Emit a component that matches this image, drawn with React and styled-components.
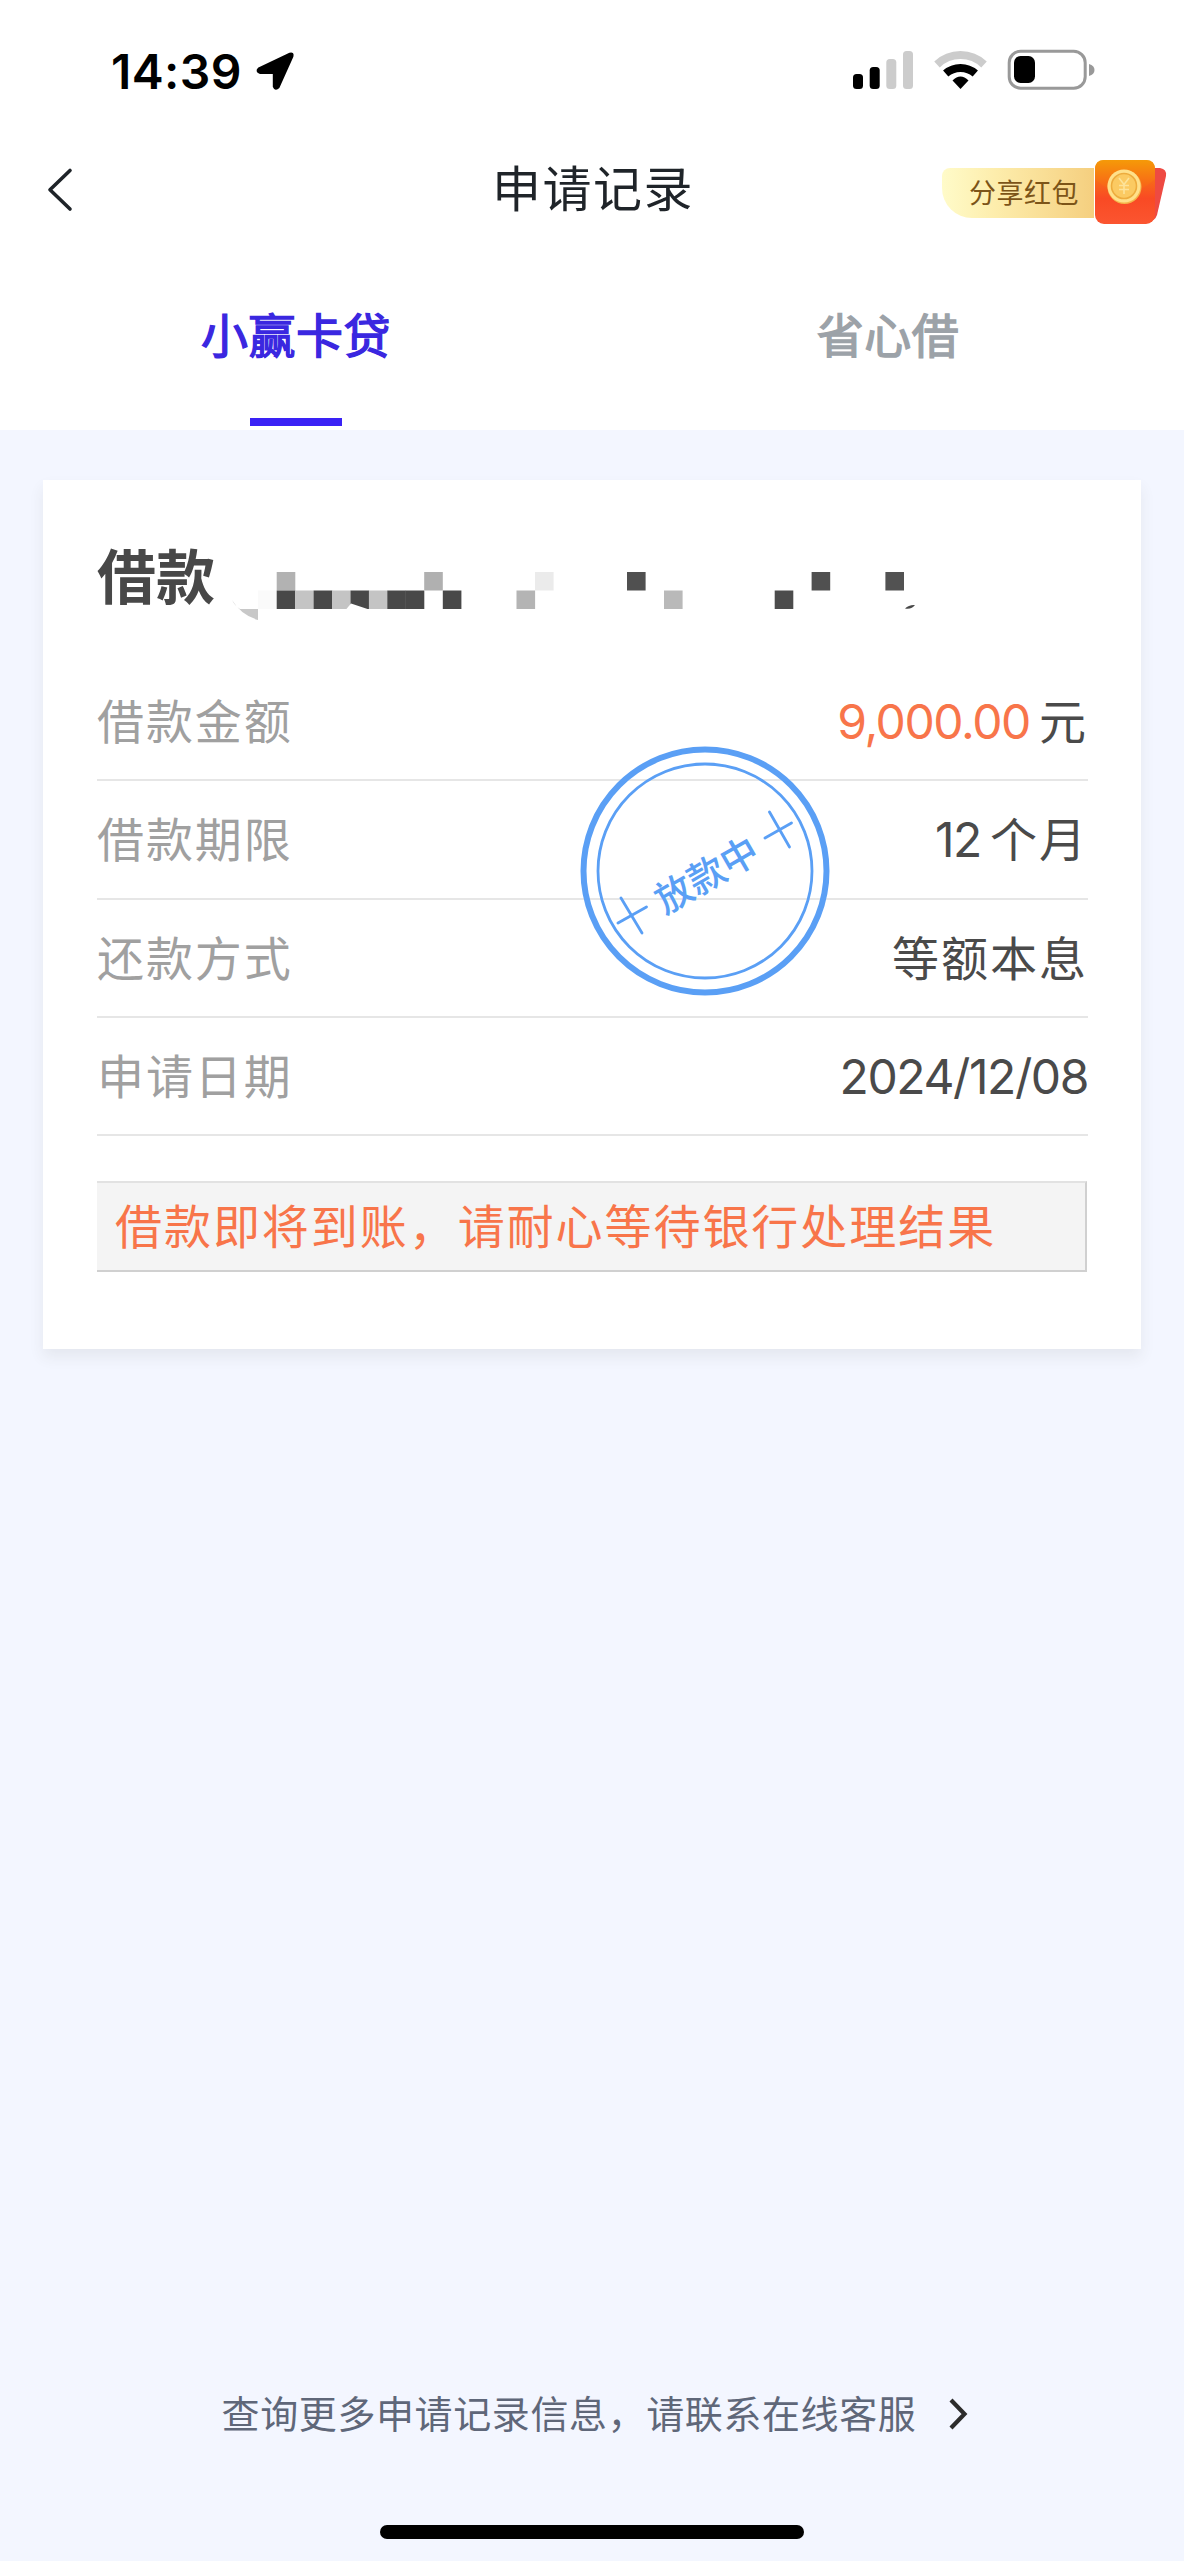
import React from 'react'
import styled, { createGlobalStyle } from 'styled-components'

const GlobalStyle = createGlobalStyle`
  * {
    box-sizing: border-box;
  }
  body {
    margin: 0;
    background: #f3f6ff;
    font-family: Inter, 'Noto Sans CJK SC', sans-serif;
  }
`

const tabs = [
  { label: '小赢卡贷', active: true },
  { label: '省心借', active: false }
]

const rows = [
  { label: '借款金额', amount: '9,000.00', value: '元' },
  { label: '借款期限', number: '12', value: '个月' },
  { label: '还款方式', value: '等额本息' },
  { label: '申请日期', number: '2024/12/08' }
]

// x, y, fill of each block that hides the loan number
const blocks = [
  [46, 18.5, '#fafafa'],
  [64.7, 0, '#b2b2b2'],
  [64.7, 18.5, '#484848'],
  [83.1, 18.5, '#c4c4c4'],
  [101.6, 18.5, '#484848'],
  [120, 18.5, '#c4c4c4'],
  [138.5, 18.5, '#484848'],
  [156.9, 18.5, '#c4c4c4'],
  [175.3, 18.5, '#484848'],
  [193.7, 18.5, '#484848'],
  [212.2, 0, '#b0b0b0'],
  [230.8, 18.5, '#484848'],
  [304.5, 18.5, '#b4b4b4'],
  [323, 0, '#ebebeb'],
  [415, 0, '#505050'],
  [452, 18.5, '#b9b9b9'],
  [562.7, 18.5, '#4c4c4c'],
  [599.6, 0, '#505050'],
  [673.4, 0, '#525252']
]

const Page = styled.div`
  display: flex;
  flex-direction: column;
  width: 1184px;
  height: 2561px;
  background: #f3f6ff;
`

const Header = styled.header`
  height: 430px;
  background: #fff;
`

const StatusBar = styled.div`
  display: flex;
  justify-content: space-between;
  height: 140px;
  padding: 42px 89px 0 111px;
`

const Clock = styled.div`
  display: flex;
  gap: 14px;
  height: 58px;
  font-size: 48px;
  font-weight: 600;
  line-height: 59px;
  letter-spacing: 0.4px;
  color: #000;
  svg {
    margin-top: 10px;
  }
`

const NavBar = styled.div`
  display: grid;
  grid-template-columns: 1fr auto 1fr;
  height: 120px;
  padding: 0 16px;
`

const BackIcon = styled.svg`
  margin: 26px 0 0 28px;
`

const Title = styled.h1`
  margin: 0;
  padding-left: 2px;
  font-size: 49px;
  font-weight: 400;
  line-height: 100px;
  letter-spacing: 1.5px;
  color: #1f2429;
`

const Share = styled.div`
  display: flex;
  justify-content: flex-end;
  align-items: flex-start;
  padding-top: 17px;
`

const ShareLabel = styled.span`
  width: 152px;
  height: 50px;
  margin-top: 11px;
  padding-left: 27px;
  border-radius: 8px 0 0 30px;
  background: linear-gradient(90deg, #fffbc9, #fdedac 35%, #f5cf7f);
  font-size: 27px;
  line-height: 52px;
  letter-spacing: 0.5px;
  white-space: nowrap;
  color: #7c5418;
`

const Tabs = styled.nav`
  display: grid;
  grid-template-columns: 1fr 1fr;
  height: 170px;
`

const Tab = styled.div`
  display: flex;
  flex-direction: column;
  align-items: center;
  justify-content: space-between;
  padding: 41px 0 4px;
  font-size: 47px;
  font-weight: 400;
  line-height: 70px;
  letter-spacing: 0.5px;
  -webkit-text-stroke: 1.4px currentColor;
  color: ${props => (props.$active ? '#3a27e0' : '#9ca2a8')};
  &::after {
    content: '';
    width: 92px;
    height: 8px;
    background: ${props => (props.$active ? '#3a22f5' : 'transparent')};
  }
`

const Card = styled.section`
  position: relative;
  height: 869px;
  margin: 50px 43px 0;
  padding: 56px 53px 0 54px;
  background: #fff;
  box-shadow: 0 8px 14px rgba(70, 65, 50, 0.08);
`

const CardHead = styled.div`
  display: flex;
  height: 127px;
`

const CardTitle = styled.h2`
  margin: 0;
  font-size: 59px;
  font-weight: 700;
  line-height: 84px;
  color: #484848;
`

const Mosaic = styled.svg`
  margin: 36px 0 0 -3px;
`

const Row = styled.div`
  display: flex;
  justify-content: space-between;
  height: 118.3px;
  padding-top: 23px;
  border-bottom: 2px solid #e6e6e6;
  line-height: 72px;
`

const Label = styled.span`
  font-size: 47px;
  letter-spacing: 1.9px;
  color: #a0a0a0;
`

const Value = styled.span`
  display: flex;
  gap: 9px;
  color: #4a4a4a;
`

const Digits = styled.span`
  font-size: 48px;
  letter-spacing: -1.4px;
  color: ${props => (props.$accent ? '#f8754a' : 'inherit')};
`

const Unit = styled.span`
  font-size: 47px;
  letter-spacing: 2px;
`

const Stamp = styled.svg`
  position: absolute;
  left: 535px;
  top: 264px;
`

const Notice = styled.p`
  height: 91px;
  margin: 45px 1px 0 0;
  padding-left: 18px;
  border: 2px solid #d0d0d0;
  border-top-color: #e2e2e2;
  border-left: 0;
  background: #f4f4f4;
  font-size: 47px;
  line-height: 87px;
  letter-spacing: 1.95px;
  white-space: nowrap;
  color: #f8754a;
`

const Footer = styled.footer`
  display: flex;
  flex-direction: column;
  align-items: center;
  height: 186px;
  margin-top: auto;
`

const Contact = styled.a`
  display: flex;
  align-items: center;
  gap: 32px;
  padding-left: 6px;
  height: 78px;
  font-size: 38px;
  letter-spacing: 0.6px;
  line-height: 78px;
  color: #5f6779;
`

const HomeIndicator = styled.div`
  width: 424px;
  height: 14px;
  margin-top: auto;
  margin-bottom: 22px;
  border-radius: 7px;
  background: #000;
`

function StatusIcons() {
  return (
    <svg width="245" height="60" viewBox="850 42 245 60">
      <rect x="853" y="74" width="10" height="15" rx="3.5" />
      <rect x="869.7" y="67" width="10" height="22" rx="3.5" />
      <rect x="886.3" y="59" width="10" height="30" rx="3.5" fill="#ccc" />
      <rect x="903" y="51" width="10" height="38" rx="3.5" fill="#ccc" />
      <path d="M937 64.5 A34 34 0 0 1 984 64.5" fill="none" stroke="#ccc" strokeWidth="8" />
      <path d="M945.7 73.5 A22.5 22.5 0 0 1 975.3 73.5" fill="none" stroke="#000" strokeWidth="8" />
      <path d="M952.5 80.5 Q960.5 72.5 968.5 80.5 L960.5 89 Z" />
      <rect x="1009.2" y="51.2" width="76" height="37" rx="11.5" fill="none" stroke="#999" strokeWidth="3" />
      <rect x="1014" y="56" width="21" height="27" rx="6.5" />
      <path d="M1089 64 Q1094.5 65.5 1094.5 70 T1089 76 Z" fill="#999" />
    </svg>
  )
}

function RedPacket() {
  return (
    <svg width="74" height="68" viewBox="1094 157 74 68">
      <defs>
        <linearGradient id="packet" x1="0" y1="0" x2="0" y2="1">
          <stop offset="0" stopColor="#f29a08" />
          <stop offset="0.32" stopColor="#f76a18" />
          <stop offset="0.6" stopColor="#f94a24" />
          <stop offset="1" stopColor="#fb5530" />
        </linearGradient>
        <linearGradient id="flap" x1="0" y1="0" x2="0" y2="1">
          <stop offset="0" stopColor="#f59a08" />
          <stop offset="1" stopColor="#f9581c" />
        </linearGradient>
      </defs>
      <path d="M1148 168 H1160 Q1167 169 1166 176 L1157 215 Q1155 221 1148 222 Z" fill="#ee4a42" />
      <rect x="1095" y="160" width="60" height="64" rx="9" fill="url(#packet)" />
      <path d="M1095 179 V169 Q1095 160 1104 160 H1146 Q1155 160 1155 169 V179 Q1140 193 1125 193 T1095 179 Z" fill="url(#flap)" />
      <circle cx="1124.5" cy="187" r="17" fill="#f4b64a" />
      <circle cx="1124" cy="186" r="16.5" fill="#ffe08a" />
      <circle cx="1124" cy="186" r="12.5" fill="#fbca62" stroke="#edac3e" strokeWidth="1.6" />
      <path d="M1119 178 L1124 184.5 L1129 178 M1124 184.5 V194 M1119 185.5 H1129 M1119 189.5 H1129" fill="none" stroke="#fde39a" strokeWidth="1.6" />
    </svg>
  )
}

function App() {
  return (
    <Page>
      <GlobalStyle />
      <Header>
        <StatusBar>
          <Clock>
            14:39
            <svg width="39" height="39" viewBox="0 0 39 39">
              <path
                d="M3 16.8 L34 2 Q37 1.2 36 4.5 L22.3 35 Q19.5 38 18.2 34.5 V20.5 H4 Q0.5 19 3 16.8 Z"
                stroke="#000"
                strokeWidth="2.8"
                strokeLinejoin="round"
              />
            </svg>
          </Clock>
          <StatusIcons />
        </StatusBar>
        <NavBar>
          <BackIcon width="34" height="48" viewBox="44 166 34 48">
            <path d="M70 170.5 L50 189.7 L70 209" fill="none" stroke="#1f2429" strokeWidth="3.6" strokeLinecap="round" strokeLinejoin="round" />
          </BackIcon>
          <Title>申请记录</Title>
          <Share>
            <ShareLabel>分享红包</ShareLabel>
            <RedPacket />
          </Share>
        </NavBar>
        <Tabs>
          {tabs.map(({ label, active }) => (
            <Tab key={label} $active={active}>{label}</Tab>
          ))}
        </Tabs>
      </Header>

      <Card>
        <CardHead>
          <CardTitle>借款</CardTitle>
          <Mosaic width="720" height="52" viewBox="0 0 720 52">
            {blocks.map(([x, y, fill]) => (
              <rect key={`${x}-${y}`} x={x} y={y} width="18.6" height="18.5" fill={fill} />
            ))}
            <path d="M134 37.5 L139 31.5 L157 37.5 Z" fill="#fff" />
            <path d="M20 28 Q23 34 28 37 H46 V48 Q29 43 20 28 Z" fill="#c8c8c8" />
            <path d="M693 36.5 Q697 32.5 703 33 Q700 37.5 693 36.5 Z" fill="#484848" />
          </Mosaic>
        </CardHead>

        {rows.map(({ label, amount, number, value }) => (
          <Row key={label}>
            <Label>{label}</Label>
            <Value>
              {amount && <Digits $accent>{amount}</Digits>}
              {number && <Digits>{number}</Digits>}
              {value && <Unit>{value}</Unit>}
            </Value>
          </Row>
        ))}

        <Notice>借款即将到账，请耐心等待银行处理结果</Notice>

        <Stamp width="254" height="254" viewBox="-127 -127 254 254">
          <g fill="none" stroke="#5a9ff5">
            <circle r="121.5" strokeWidth="6" />
            <circle r="107" strokeWidth="2.8" />
            <path d="M-87 52 L-58.5 36 M-84 27 L-63 62 M60 -33 L86.5 -48 M64.5 -59 L84.5 -24" strokeWidth="2.8" strokeLinecap="round" />
          </g>
          <text transform="rotate(-30)" x="-0.5" y="18" textAnchor="middle" fontSize="37.5" fontWeight="500" fill="#5a9ff5">
            放款中
          </text>
        </Stamp>
      </Card>

      <Footer>
        <Contact>
          查询更多申请记录信息，请联系在线客服
          <svg width="20" height="34" viewBox="0 0 20 34">
            <path d="M3 3 L16.5 17 L3 31" fill="none" stroke="#2c2c2c" strokeWidth="4.2" />
          </svg>
        </Contact>
        <HomeIndicator />
      </Footer>
    </Page>
  )
}

export default App
